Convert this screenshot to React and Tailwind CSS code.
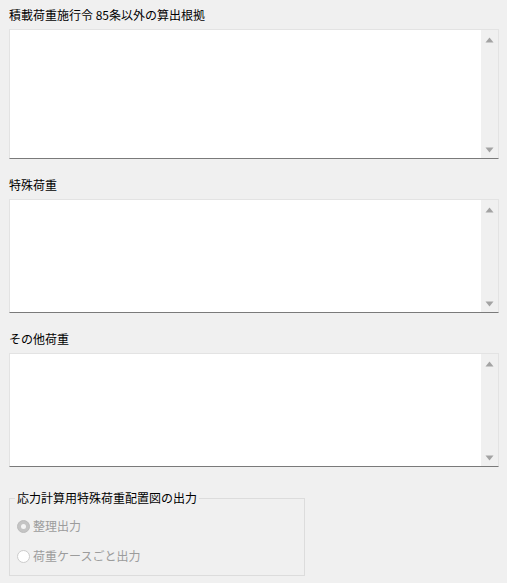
import React from "react";

const ArrowUp = () => (
  <svg width="9" height="6" viewBox="0 0 9 6" className="block">
    <path d="M4.5 0.5 L8.5 5.5 L0.5 5.5 Z" fill="#a3a3a3" />
  </svg>
);

const ArrowDown = () => (
  <svg width="9" height="6" viewBox="0 0 9 6" className="block">
    <path d="M0.5 0.5 L8.5 0.5 L4.5 5.5 Z" fill="#a3a3a3" />
  </svg>
);

const TextBox = ({ height }) => (
  <div
    className={`flex w-[490px] bg-white border-t border-l border-r border-[#e3e3e3] border-b border-b-[#7a7a7a] ${height}`}
  >
    <div className="flex-1" />
    <div className="w-[17px] bg-[#f0f0f0] flex flex-col items-center justify-between pt-[7px] pb-[5px]">
      <ArrowUp />
      <ArrowDown />
    </div>
  </div>
);

const Field = ({ label, height, className }) => (
  <div className={`flex flex-col gap-[6px] ${className}`}>
    <div className="h-[16px] leading-[16px] text-black">{label}</div>
    <TextBox height={height} />
  </div>
);

const Radio = ({ checked, label }) => (
  <div className="flex items-center h-[16px] gap-[3px]">
    {checked ? (
      <div className="w-[13px] h-[13px] rounded-full bg-[#c4c4c4] border border-[#bcbcbc] flex items-center justify-center">
        <div className="w-[5px] h-[5px] rounded-full bg-[#f4f4f4]" />
      </div>
    ) : (
      <div className="w-[13px] h-[13px] rounded-full bg-white border border-[#cccccc]" />
    )}
    <span className="text-[#9c9c9c] leading-[16px]">{label}</span>
  </div>
);

export default function App() {
  return (
    <div
      className="w-[507px] h-[583px] bg-[#f0f0f0] pl-[9px] pt-[7px] text-[12px] overflow-hidden"
      style={{ fontFamily: '"Noto Sans CJK JP", "Noto Sans", sans-serif' }}
    >
      <Field label="積載荷重施行令 85条以外の算出根拠" height="h-[130px]" />
      <Field label="特殊荷重" height="h-[114px]" className="mt-[18px]" />
      <Field label="その他荷重" height="h-[114px]" className="mt-[18px]" />
      <fieldset className="mt-[23px] w-[296px] h-[86px] border border-[#dcdcdc] pl-[7px]">
        <legend className="ml-[-2px] px-[2px] h-[16px] leading-[16px] text-black">
          応力計算用特殊荷重配置図の出力
        </legend>
        <div className="flex flex-col gap-[14px] mt-[12px]">
          <Radio checked label="整理出力" />
          <Radio label="荷重ケースごと出力" />
        </div>
      </fieldset>
    </div>
  );
}
